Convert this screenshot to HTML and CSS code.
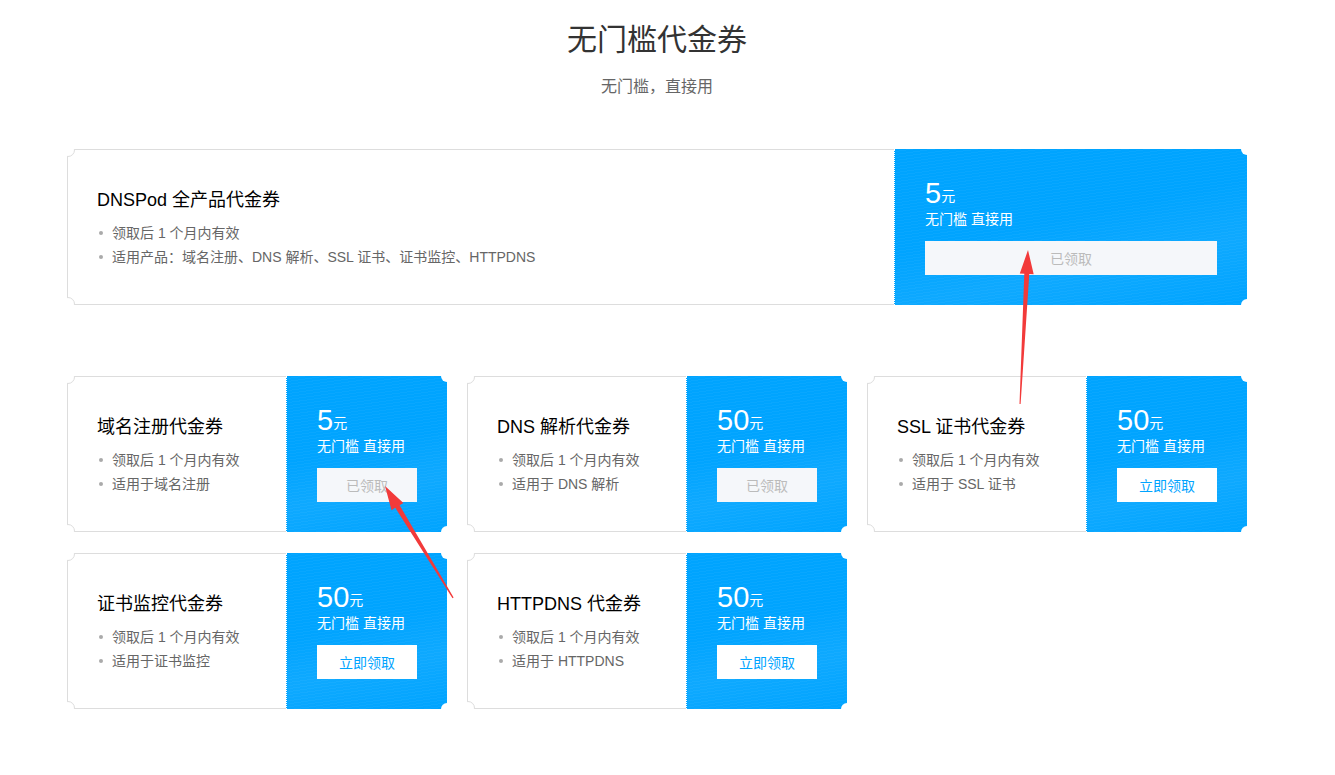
FILE: index.html
```html
<!DOCTYPE html>
<html lang="zh-CN">
<head>
<meta charset="utf-8">
<title>无门槛代金券</title>
<link rel="stylesheet" href="styles.css">
</head>
<body>
<div class="page">
  <h1 class="title">无门槛代金券</h1>
  <p class="subtitle">无门槛，直接用</p>

  <div class="card card-wide">
    <div class="info">
      <div class="name">DNSPod 全产品代金券</div>
      <ul class="rules">
        <li>领取后 1 个月内有效</li>
        <li>适用产品：域名注册、DNS 解析、SSL 证书、证书监控、HTTPDNS</li>
      </ul>
    </div>
    <div class="value value-wide">
      <div class="amount"><span class="num">5</span><span class="unit">元</span></div>
      <div class="cond">无门槛 直接用</div>
      <button class="btn btn-done">已领取</button>
    </div>
  </div>

  <div class="grid">
    <div class="card">
      <div class="info">
        <div class="name">域名注册代金券</div>
        <ul class="rules">
          <li>领取后 1 个月内有效</li>
          <li>适用于域名注册</li>
        </ul>
      </div>
      <div class="value">
        <div class="amount"><span class="num">5</span><span class="unit">元</span></div>
        <div class="cond">无门槛 直接用</div>
        <button class="btn btn-done">已领取</button>
      </div>
    </div>
    <div class="card">
      <div class="info">
        <div class="name">DNS 解析代金券</div>
        <ul class="rules">
          <li>领取后 1 个月内有效</li>
          <li>适用于 DNS 解析</li>
        </ul>
      </div>
      <div class="value">
        <div class="amount"><span class="num">50</span><span class="unit">元</span></div>
        <div class="cond">无门槛 直接用</div>
        <button class="btn btn-done">已领取</button>
      </div>
    </div>
    <div class="card">
      <div class="info">
        <div class="name">SSL 证书代金券</div>
        <ul class="rules">
          <li>领取后 1 个月内有效</li>
          <li>适用于 SSL 证书</li>
        </ul>
      </div>
      <div class="value">
        <div class="amount"><span class="num">50</span><span class="unit">元</span></div>
        <div class="cond">无门槛 直接用</div>
        <button class="btn btn-get">立即领取</button>
      </div>
    </div>
    <div class="card">
      <div class="info">
        <div class="name">证书监控代金券</div>
        <ul class="rules">
          <li>领取后 1 个月内有效</li>
          <li>适用于证书监控</li>
        </ul>
      </div>
      <div class="value">
        <div class="amount"><span class="num">50</span><span class="unit">元</span></div>
        <div class="cond">无门槛 直接用</div>
        <button class="btn btn-get">立即领取</button>
      </div>
    </div>
    <div class="card">
      <div class="info">
        <div class="name">HTTPDNS 代金券</div>
        <ul class="rules">
          <li>领取后 1 个月内有效</li>
          <li>适用于 HTTPDNS</li>
        </ul>
      </div>
      <div class="value">
        <div class="amount"><span class="num">50</span><span class="unit">元</span></div>
        <div class="cond">无门槛 直接用</div>
        <button class="btn btn-get">立即领取</button>
      </div>
    </div>
  </div>
</div>

<svg class="arrows" width="1335" height="775" viewBox="0 0 1335 775">
  <polygon fill="#f23a3a" points="1028,250 1033.7,274.3 1029.3,274.1 1020.6,404 1019.5,404 1024.3,273.8 1019.8,273.6"/>
  <polygon fill="#f23a3a" points="385,486 403.4,502.9 399.6,505.2 453.6,597.6 452.5,598.3 395.3,507.8 391.5,510.2"/>
</svg>
</body>
</html>
```

FILE: styles.css
```css
* { box-sizing: border-box; }

html, body {
  margin: 0;
  padding: 0;
  background: #fff;
}

body {
  width: 1314px;
  position: relative;
  font-family: "Liberation Sans", Arial, "Noto Sans CJK SC", sans-serif;
  color: #333;
}

.page {
  width: 1180px;
  margin: 0 auto;
  padding-top: 20px;
}

.title {
  margin: 0;
  font-size: 30px;
  line-height: 40px;
  font-weight: normal;
  text-align: center;
  color: #333;
}

.subtitle {
  margin: 17px 0 0;
  font-size: 16px;
  line-height: 20px;
  text-align: center;
  color: #666;
}

.card {
  display: flex;
  height: 156px;
  position: relative;
  overflow: hidden;
}

.card-wide {
  margin-top: 52px;
}

.card::before,
.card::after {
  content: "";
  position: absolute;
  left: -6px;
  width: 12px;
  height: 12px;
  border-radius: 50%;
  background: #fff;
  border: 1px solid #ddd;
  z-index: 2;
}
.card::before { top: -6px; }
.card::after { bottom: -6px; }

.info {
  flex: 1;
  display: flex;
  flex-direction: column;
  justify-content: center;
  padding-left: 29px;
  padding-top: 3px;
  border: 1px solid #ddd;
  border-right: none;
}

.name {
  font-size: 18px;
  line-height: 24px;
  color: #000;
}

.rules {
  list-style: none;
  margin: 9px 0 0;
  padding: 0;
}

.rules li {
  position: relative;
  padding-left: 15px;
  font-size: 14px;
  line-height: 24px;
  color: #666;
}

.rules li::before {
  content: "";
  position: absolute;
  left: 2px;
  top: 10px;
  width: 4px;
  height: 4px;
  border-radius: 50%;
  background: #aaa;
}

.value {
  width: 161px;
  flex: none;
  position: relative;
  padding: 28px 30px 30px 30px;
  border-left: 1px dotted #fff;
  color: #fff;
  background-color: #00a4ff;
  background-image:
    repeating-linear-gradient(172deg, rgba(255,255,255,0) 0 2px, rgba(255,255,255,0.035) 2px 3px),
    linear-gradient(168deg, rgba(255,255,255,0) 45%, rgba(255,255,255,0.06) 70%, rgba(255,255,255,0) 100%);
  display: flex;
  flex-direction: column;
}

.value-wide {
  width: 353px;
}

.value::before,
.value::after {
  content: "";
  position: absolute;
  right: -6px;
  width: 12px;
  height: 12px;
  border-radius: 50%;
  background: #fff;
  z-index: 2;
}
.value::before { top: -6px; }
.value::after { bottom: -6px; }

.amount {
  height: 32px;
  line-height: 32px;
  white-space: nowrap;
}

.num {
  font-size: 29px;
  vertical-align: bottom;
}

.unit {
  font-size: 14px;
  vertical-align: bottom;
  line-height: 26px;
}

.cond {
  font-size: 14px;
  line-height: 20px;
  white-space: nowrap;
}

.btn {
  margin-top: 12px;
  height: 34px;
  border: none;
  padding: 0;
  width: 100%;
  font-family: inherit;
  font-size: 14px;
  cursor: pointer;
}

.btn-done {
  background: #f5f7fa;
  color: #bbb;
}

.btn-get {
  background: #fff;
  color: #00a4ff;
}

.grid {
  margin-top: 71px;
  display: grid;
  grid-template-columns: repeat(3, 380px);
  column-gap: 20px;
  row-gap: 21px;
}

.arrows {
  position: absolute;
  left: 0;
  top: 0;
  pointer-events: none;
}
```
